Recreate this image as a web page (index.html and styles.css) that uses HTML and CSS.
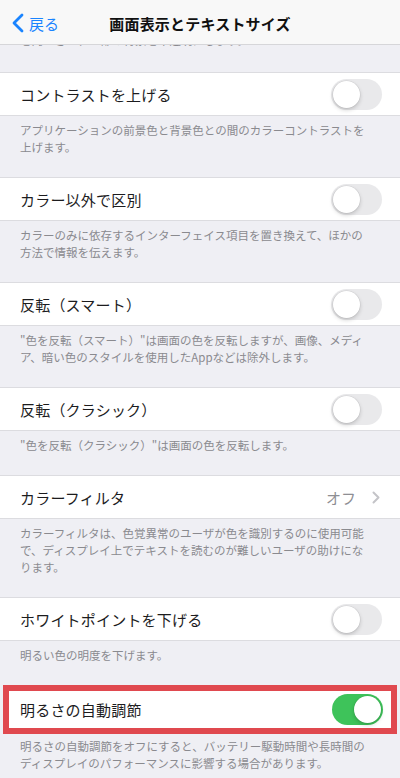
FILE: index.html
```html
<!DOCTYPE html>
<html lang="ja">
<head>
  <meta charset="UTF-8">
  <meta name="viewport" content="width=device-width, initial-scale=1.0">
  <title>画面表示とテキストサイズ</title>
  <link rel="stylesheet" href="styles.css">
</head>
<body>

  <div class="navbar">
    <div class="back">
      <svg class="back-icon" width="12" height="20" viewBox="0 0 12 20">
        <path d="M10 2 L2 10 L10 18" fill="none" stroke="#1a84ff" stroke-width="2.8" stroke-linecap="round" stroke-linejoin="round"/>
      </svg>
      <span>戻る</span>
    </div>
    <div class="title">画面表示とテキストサイズ</div>
    <div class="spacer"></div>
  </div>

  <div class="peek">
    <p>を向上させ、一部の背景を不透明にします。</p>
  </div>

  <div class="row">
    <span class="label">コントラストを上げる</span>
    <div class="switch"><div class="knob"></div></div>
  </div>
  <div class="desc">アプリケーションの前景色と背景色との間のカラーコントラストを<br>上げます。</div>

  <div class="row">
    <span class="label">カラー以外で区別</span>
    <div class="switch"><div class="knob"></div></div>
  </div>
  <div class="desc">カラーのみに依存するインターフェイス項目を置き換えて、ほかの<br>方法で情報を伝えます。</div>

  <div class="row">
    <span class="label">反転（スマート）</span>
    <div class="switch"><div class="knob"></div></div>
  </div>
  <div class="desc">"色を反転（スマート）"は画面の色を反転しますが、画像、メディ<br>ア、暗い色のスタイルを使用したAppなどは除外します。</div>

  <div class="row">
    <span class="label">反転（クラシック）</span>
    <div class="switch"><div class="knob"></div></div>
  </div>
  <div class="desc">"色を反転（クラシック）"は画面の色を反転します。</div>

  <div class="row">
    <span class="label">カラーフィルタ</span>
    <div class="detail">
      <span>オフ</span>
      <svg width="8" height="13" viewBox="0 0 8 13">
        <path d="M1.5 1.5 L6.5 6.5 L1.5 11.5" fill="none" stroke="#c4c4c8" stroke-width="2" stroke-linecap="round" stroke-linejoin="round"/>
      </svg>
    </div>
  </div>
  <div class="desc">カラーフィルタは、色覚異常のユーザが色を識別するのに使用可能<br>で、ディスプレイ上でテキストを読むのが難しいユーザの助けにな<br>ります。</div>

  <div class="row">
    <span class="label">ホワイトポイントを下げる</span>
    <div class="switch"><div class="knob"></div></div>
  </div>
  <div class="desc">明るい色の明度を下げます。</div>

  <div class="highlight">
    <div class="row row-in">
      <span class="label">明るさの自動調節</span>
      <div class="switch on"><div class="knob"></div></div>
    </div>
  </div>
  <div class="desc desc-last">明るさの自動調節をオフにすると、バッテリー駆動時間や長時間の<br>ディスプレイのパフォーマンスに影響する場合があります。</div>

</body>
</html>
```

FILE: styles.css
```css
body {
  margin: 0;
  padding: 0;
  width: 400px;
  height: 778px;
  overflow: hidden;
  background-color: #efeff4;
  font-family: "Noto Sans CJK JP", "Noto Sans", sans-serif;
  color: #1c1c1e;
}

.navbar {
  height: 44px;
  background-color: #f8f8f8;
  border-bottom: 1px solid #d6d6d9;
  display: flex;
  align-items: center;
  justify-content: space-between;
}

.back {
  width: 90px;
  display: flex;
  align-items: center;
  padding-left: 12px;
  color: #1a84ff;
  font-size: 15px;
  box-sizing: border-box;
  margin-top: 2px;
}

.back-icon {
  margin-right: 5px;
}

.title {
  font-size: 15px;
  font-weight: bold;
  letter-spacing: 0.2px;
  color: #111;
  margin-top: 2px;
}

.spacer {
  width: 90px;
}

/* bottom of the previous footer, scrolled under the bar */
.peek {
  height: 27px;
  overflow: hidden;
}

.peek p {
  margin: -13px 0 0 20px;
  font-size: 11.5px;
  line-height: 17px;
  color: #8a8a8f;
}

.row {
  box-sizing: border-box;
  height: 44px;
  background-color: #fff;
  border-top: 1px solid #dcdce0;
  border-bottom: 1px solid #dcdce0;
  display: flex;
  align-items: center;
  justify-content: space-between;
  padding: 0 18px 0 20px;
}

.label {
  font-size: 15px;
  letter-spacing: 0.2px;
}

.switch {
  width: 51px;
  height: 31px;
  border-radius: 16px;
  background-color: #e9e9eb;
  position: relative;
  flex-shrink: 0;
}

.knob {
  position: absolute;
  top: 2px;
  left: 2px;
  width: 27px;
  height: 27px;
  border-radius: 50%;
  background-color: #fff;
  box-shadow: 0 0 0 0.5px rgba(0, 0, 0, 0.08), 0 2px 4px rgba(0, 0, 0, 0.18);
}

.switch.on {
  background-color: #3ec35a;
}

.switch.on .knob {
  left: 22px;
}

.detail {
  display: flex;
  align-items: center;
  gap: 16px;
  color: #8e8e93;
  font-size: 15px;
  padding-right: 2px;
}

.desc {
  padding: 6px 20px 21px 20px;
  font-size: 11.5px;
  line-height: 17px;
  color: #8a8a8f;
}

.highlight {
  margin: 0 3px;
  border: 6px solid #e0494f;
}

.row-in {
  height: 37px;
  border: none;
  padding: 0 8px 0 11px;
}

.desc-last {
  padding-top: 4px;
}
```
